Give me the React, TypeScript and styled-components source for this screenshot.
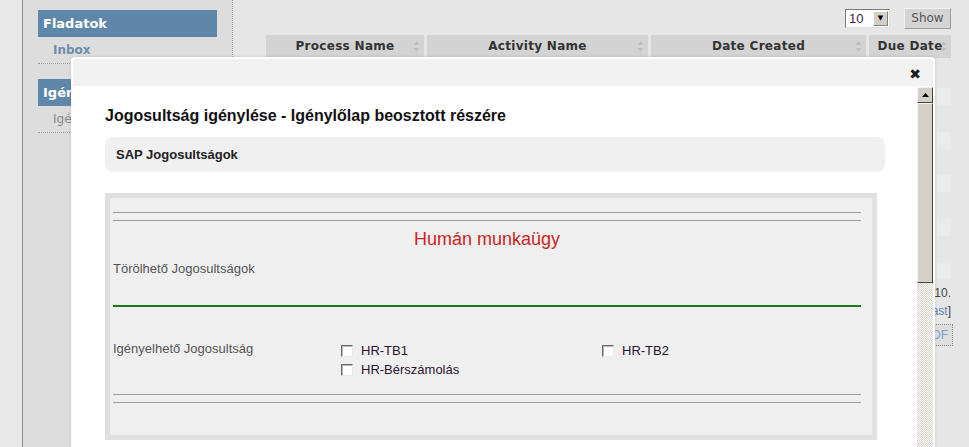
import React from "react";
import styled, { createGlobalStyle } from "styled-components";

const GlobalStyle = createGlobalStyle`
  html, body {
    margin: 0;
    padding: 0;
    background: #e6e6e6;
    overflow: hidden;
  }
  * {
    box-sizing: border-box;
  }
`;

const columns = [
  { title: "Process Name", width: 158 },
  { title: "Activity Name", width: 221 },
  { title: "Date Created", width: 215 },
  { title: "Due Date", width: 82 },
];

const rows = [1, 2, 3, 4, 5];

function SortIcon() {
  return (
    <svg width="7" height="11" viewBox="0 0 7 11">
      <path d="M3.5 0.5 L6.5 4 L0.5 4 Z" fill="#bdbdbd" />
      <path d="M3.5 10.5 L6.5 7 L0.5 7 Z" fill="#bdbdbd" />
    </svg>
  );
}

export default function App() {
  return (
    <>
      <GlobalStyle />
      <Page>
        <LeftStrip />
        <Sidebar>
          <SideHeader>Fladatok</SideHeader>
          <SideItem $active>Inbox</SideItem>
          <SideHeader>Igénylések</SideHeader>
          <SideItem>Igénylés</SideItem>
        </Sidebar>

        <Main>
          <Controls>
            <Select>
              <SelectValue>10</SelectValue>
              <SelectArrow>▼</SelectArrow>
            </Select>
            <ShowButton>Show</ShowButton>
          </Controls>
          <TableHead>
            {columns.map((c) => (
              <HeadCell key={c.title} $width={c.width}>
                {c.title}
                <SortSlot>
                  <SortIcon />
                </SortSlot>
              </HeadCell>
            ))}
          </TableHead>
          <TableBody>
            {rows.map((r) => (
              <Row key={r}>
                {columns.map((c, i) => (
                  <Cell key={c.title} $width={c.width}>
                    {i === columns.length - 1 && <CellBox />}
                  </Cell>
                ))}
              </Row>
            ))}
          </TableBody>
          <Footer>
            <FooterText>Showing 1 to 10 of 10.</FooterText>
            <FooterText>
              [<PagerLink>First</PagerLink>] [<PagerLink>Prev</PagerLink>] [
              <PagerLink>Next</PagerLink>] [<PagerLink>Last</PagerLink>]
            </FooterText>
            <ExportButton>PDF</ExportButton>
          </Footer>
        </Main>

        <Modal>
          <TitleBar>
            <CloseButton>✖</CloseButton>
          </TitleBar>
          <ModalBody>
            <Content>
              <FormTitle>
                Jogosultság igénylése - Igénylőlap beosztott részére
              </FormTitle>
              <SectionBox>SAP Jogosultságok</SectionBox>
              <Panel>
                <DoubleRule />
                <GroupTitle>Humán munkaügy</GroupTitle>
                <FieldLabel>Törölhető Jogosultságok</FieldLabel>
                <GreenRule />
                <ChoiceGrid>
                  <FieldLabel>Igényelhető Jogosultság</FieldLabel>
                  <ChoiceColumn>
                    <Choice>
                      <CheckBox />
                      HR-TB1
                    </Choice>
                    <Choice>
                      <CheckBox />
                      HR-Bérszámolás
                    </Choice>
                  </ChoiceColumn>
                  <ChoiceColumn>
                    <Choice>
                      <CheckBox />
                      HR-TB2
                    </Choice>
                  </ChoiceColumn>
                </ChoiceGrid>
                <DoubleRule $top={15} />
              </Panel>
            </Content>
            <ScrollBar>
              <ScrollArrow>
                <svg width="7" height="4" viewBox="0 0 7 4">
                  <path d="M3.5 0 L7 4 L0 4 Z" fill="#000" />
                </svg>
              </ScrollArrow>
              <ScrollThumb />
              <ScrollTrack />
            </ScrollBar>
          </ModalBody>
        </Modal>
      </Page>
    </>
  );
}

const Page = styled.div`
  position: relative;
  display: flex;
  height: 100vh;
  background: #e6e6e6;
  font-family: "DejaVu Sans", sans-serif;
`;

const LeftStrip = styled.div`
  width: 23px;
  flex-shrink: 0;
  background: #e8e8e8;
  border-right: 1px solid #8c8c8c;
`;

const Sidebar = styled.div`
  width: 210px;
  flex-shrink: 0;
  background: #dddddd;
  border-right: 1px dotted #9a9a9a;
  padding: 10px 0 0 15px;
  display: flex;
  flex-direction: column;
`;

const SideHeader = styled.div`
  width: 179px;
  height: 27px;
  background: #5f87a9;
  color: #ffffff;
  font-size: 13px;
  font-weight: 700;
  line-height: 27px;
  padding-left: 5px;
`;

const SideItem = styled.div<{ $active?: boolean }>`
  height: 27px;
  margin-bottom: 15px;
  padding: 6px 0 0 15px;
  font-size: 12px;
  font-weight: ${(p) => (p.$active ? 700 : 400)};
  color: ${(p) => (p.$active ? "#6d8db0" : "#8a8a8a")};
  border-bottom: 1px dotted #9a9a9a;
  line-height: 14px;
`;

const Main = styled.div`
  flex: 1;
  padding: 8px 19px 0 33px;
  display: flex;
  flex-direction: column;
`;

const Controls = styled.div`
  display: flex;
  justify-content: flex-end;
  align-items: center;
  gap: 14px;
  height: 21px;
`;

const Select = styled.div`
  display: flex;
  align-items: center;
  width: 45px;
  height: 19px;
  background: #ffffff;
  border: 1px solid;
  border-color: #7a7a7a #e0e0e0 #e0e0e0 #7a7a7a;
`;

const SelectValue = styled.div`
  flex: 1;
  padding-left: 3px;
  font-family: "Liberation Sans", Arial, sans-serif;
  font-size: 13px;
  color: #3a1a3a;
`;

const SelectArrow = styled.div`
  width: 15px;
  height: 15px;
  margin-right: 1px;
  background: #d4d0c8;
  border: 1px solid;
  border-color: #ffffff #808080 #808080 #ffffff;
  font-size: 7px;
  line-height: 13px;
  text-align: center;
  color: #000;
`;

const ShowButton = styled.div`
  width: 47px;
  height: 21px;
  background: #d4d4d4;
  border: 1px solid;
  border-color: #f2f2f2 #9a9a9a #9a9a9a #f2f2f2;
  font-size: 12px;
  line-height: 19px;
  text-align: center;
  color: #555;
`;

const TableHead = styled.div`
  display: flex;
  gap: 3px;
  margin-top: 6px;
`;

const HeadCell = styled.div<{ $width: number }>`
  position: relative;
  width: ${(p) => p.$width}px;
  height: 23px;
  background: #d3d3d3;
  color: #333;
  font-size: 12px;
  font-weight: 700;
  line-height: 23px;
  text-align: center;
  white-space: nowrap;
  letter-spacing: 0.3px;
`;

const SortSlot = styled.span`
  position: absolute;
  right: 4px;
  top: 6px;
  display: flex;
`;

const TableBody = styled.div`
  padding-top: 10px;
  display: flex;
  flex-direction: column;
`;

const Row = styled.div`
  display: flex;
  gap: 3px;
  height: 43.5px;
`;

const Cell = styled.div<{ $width: number }>`
  width: ${(p) => p.$width}px;
  padding: 20px 0 0 68px;
`;

const CellBox = styled.div`
  width: 14px;
  height: 17px;
  background: #ebebeb;
`;

const Footer = styled.div`
  display: flex;
  flex-direction: column;
  align-items: flex-end;
  font-family: "Liberation Sans", Arial, sans-serif;
  font-size: 12px;
`;

const FooterText = styled.div`
  line-height: 14px;
  margin-bottom: 4px;
  color: #444;
  white-space: nowrap;
`;

const PagerLink = styled.span`
  color: #5b86b0;
`;

const ExportButton = styled.div`
  margin-top: 2px;
  margin-right: -2px;
  padding: 3px 4px;
  border: 1px dotted #888;
  background: #dedede;
  color: #7ba0c8;
  font-size: 12px;
`;

const Modal = styled.div`
  position: absolute;
  left: 71px;
  top: 57px;
  width: 864px;
  height: 400px;
  background: #ffffff;
  border-radius: 4px 4px 0 0;
  padding: 2px 2px 0 2px;
  display: flex;
  flex-direction: column;
  box-shadow: 0 0 3px rgba(0, 0, 0, 0.15);
`;

const TitleBar = styled.div`
  height: 27px;
  background: #f2f2f2;
  border-radius: 3px 3px 0 0;
  display: flex;
  justify-content: flex-end;
  align-items: center;
  padding-right: 12px;
`;

const CloseButton = styled.span`
  font-size: 14px;
  color: #1a1a1a;
  line-height: 1;
  margin-top: 2px;
`;

const ModalBody = styled.div`
  flex: 1;
  display: flex;
  min-height: 0;
`;

const Content = styled.div`
  flex: 1;
  padding: 21px 32px 0 32px;
  font-family: "Liberation Sans", Arial, sans-serif;
  overflow: hidden;
`;

const FormTitle = styled.div`
  font-size: 16px;
  font-weight: 700;
  line-height: 18px;
  color: #111;
`;

const SectionBox = styled.div`
  margin-top: 12px;
  height: 35px;
  background: #f0f0f0;
  border-radius: 8px;
  padding-left: 11px;
  font-size: 13px;
  font-weight: 700;
  line-height: 35px;
  color: #222;
`;

const Panel = styled.div`
  margin-top: 21px;
  width: 772px;
  border: 5px solid #e0e0e0;
  background: #efefef;
  padding: 14px 11px 32px 3px;
`;

const DoubleRule = styled.div<{ $top?: number }>`
  margin-top: ${(p) => p.$top ?? 0}px;
  height: 9px;
  border-top: 1px solid #9c9c9c;
  border-bottom: 1px solid #9c9c9c;
`;

const GroupTitle = styled.div`
  margin-top: 7px;
  text-align: center;
  font-size: 18px;
  line-height: 22px;
  color: #cc1f1f;
`;

const FieldLabel = styled.div`
  margin-top: 11px;
  font-size: 13px;
  line-height: 15px;
  color: #555;
`;

const GreenRule = styled.div`
  margin-top: 29px;
  height: 2px;
  background: #1c7a1c;
`;

const ChoiceGrid = styled.div`
  margin-top: 34px;
  display: grid;
  grid-template-columns: 228px 261px 1fr;
  align-items: start;

  & > ${FieldLabel} {
    margin-top: 0;
  }
`;

const ChoiceColumn = styled.div`
  display: flex;
  flex-direction: column;
`;

const Choice = styled.div`
  display: flex;
  align-items: center;
  gap: 8px;
  height: 19px;
  font-size: 13px;
  color: #2b1230;
`;

const CheckBox = styled.span`
  width: 12px;
  height: 12px;
  background: #ffffff;
  border: 1px solid;
  border-color: #6a6a6a #e8e8e8 #e8e8e8 #6a6a6a;
  box-shadow: inset 1px 1px 0 #b8b8b8;
`;

const ScrollBar = styled.div`
  width: 16px;
  margin-top: 1px;
  display: flex;
  flex-direction: column;
`;

const ScrollArrow = styled.div`
  height: 16px;
  background: #d4d0c8;
  border: 1px solid;
  border-color: #f4f4f4 #404040 #404040 #f4f4f4;
  display: flex;
  align-items: center;
  justify-content: center;
`;

const ScrollThumb = styled.div`
  height: 180px;
  background: #d4d0c8;
  border: 1px solid;
  border-color: #f4f4f4 #404040 #404040 #f4f4f4;
`;

const ScrollTrack = styled.div`
  flex: 1;
  background: repeating-conic-gradient(#d4d0c8 0% 25%, #ffffff 0% 50%) 0 0 / 2px 2px;
`;
